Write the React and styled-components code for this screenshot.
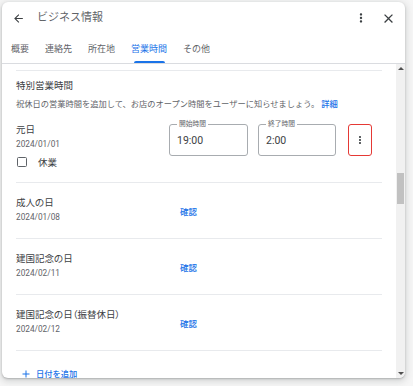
import React from 'react';
import styled, { createGlobalStyle } from 'styled-components';

const Global = createGlobalStyle`
  html, body { margin: 0; padding: 0; background: #f6f6f6; }
  body { font-family: Roboto, "Noto Sans CJK JP", sans-serif; color: #3c4043; }
  * { box-sizing: border-box; }
`;

const Page = styled.div`
  padding: 2px 0 0 2px;
  height: 386px;
`;

const Dialog = styled.div`
  width: 403px;
  height: 376px;
  background: #fff;
  border-radius: 6px;
  box-shadow: 0 1px 2px rgba(60, 64, 67, 0.3), 0 2px 6px 2px rgba(60, 64, 67, 0.15);
  display: flex;
  flex-direction: column;
  overflow: hidden;
`;

const Header = styled.div`
  height: 32px;
  flex: none;
  display: flex;
  align-items: center;
  padding: 0 5px 0 4px;
  gap: 3px;
`;

const IconButton = styled.div`
  width: 24px;
  height: 24px;
  display: flex;
  align-items: center;
  justify-content: center;
  color: #3c4043;
`;

const Title = styled.div`
  flex: 1;
  margin-left: 4px;
  font-size: 11px;
  color: #5f6368;
  line-height: 16px;
`;

const TabBar = styled.div`
  height: 30px;
  flex: none;
  display: flex;
  padding-left: 1px;
  border-bottom: 1px solid #dadce0;
`;

const Tab = styled.div`
  position: relative;
  padding: 0 8px;
  display: flex;
  align-items: center;
  font-size: 9px;
  color: ${(p) => (p.$active ? '#1a73e8' : '#5f6368')};
  &::after {
    content: '';
    display: ${(p) => (p.$active ? 'block' : 'none')};
    position: absolute;
    left: 11px;
    right: 10px;
    bottom: 0;
    height: 2.5px;
    border-radius: 2px 2px 0 0;
    background: #1a73e8;
  }
`;

const Body = styled.div`
  flex: 1;
  min-height: 0;
  display: flex;
`;

const Content = styled.div`
  flex: 1;
  overflow: hidden;
  padding: 6px 14px 0 14px;
`;

const Divider = styled.div`
  height: 1px;
  background: #e8eaed;
`;

const SectionTitle = styled.div`
  margin-top: 7px;
  font-size: 9.5px;
  line-height: 16px;
  color: #3c4043;
`;

const Description = styled.div`
  margin-top: 3px;
  font-size: 8.25px;
  line-height: 14px;
  color: #5f6368;
  white-space: nowrap;
`;

const Link = styled.span`
  color: #1a73e8;
  font-weight: 500;
`;

const Row = styled.div`
  display: flex;
  align-items: ${(p) => (p.$top ? 'flex-start' : 'center')};
  justify-content: ${(p) => (p.$top ? 'space-between' : 'flex-start')};
  padding: ${(p) => (p.$top ? '12px 0 13px' : '13px 0 14px')};
  border-bottom: 1px solid #e8eaed;
`;

const DayInfo = styled.div`
  width: ${(p) => (p.$w ? `${p.$w}px` : 'auto')};
  flex: none;
  display: flex;
  flex-direction: column;
`;

const DayName = styled.div`
  font-size: 9.5px;
  line-height: 14px;
  color: #3c4043;
  white-space: nowrap;
  font-feature-settings: 'palt';
`;

const DayDate = styled.div`
  font-size: 8.25px;
  line-height: 14px;
  color: #5f6368;
`;

const CheckRow = styled.div`
  margin-top: 4px;
  height: 14px;
  display: flex;
  align-items: center;
  gap: 11px;
  font-size: 9.5px;
  color: #3c4043;
`;

const CheckBox = styled.div`
  margin-left: 1px;
  width: 10px;
  height: 10px;
  border: 1.5px solid #5f6368;
  border-radius: 1.5px;
`;

const Confirm = styled.div`
  margin-top: 4px;
  font-size: 8.5px;
  line-height: 14px;
  font-weight: 500;
  color: #1a73e8;
`;

const Fields = styled.div`
  margin-top: 1px;
  margin-right: 10px;
  display: flex;
  align-items: center;
`;

const TimeField = styled.div`
  position: relative;
  width: ${(p) => p.$w}px;
  height: 32px;
  margin-right: ${(p) => p.$mr}px;
  border: 1px solid #a8acb0;
  border-radius: 3px;
  display: flex;
  align-items: center;
  padding-left: 7px;
  font-size: 10.5px;
  color: #3c4043;
`;

const FieldLabel = styled.span`
  position: absolute;
  left: 7px;
  top: -5px;
  padding: 0 2px;
  background: #fff;
  font-size: 6.75px;
  line-height: 9px;
  color: #5f6368;
`;

const MenuButton = styled.div`
  width: 24px;
  height: 32px;
  border: 1.5px solid #e53935;
  border-radius: 3px;
  display: flex;
  align-items: center;
  justify-content: center;
  color: #3c4043;
`;

const AddRow = styled.div`
  margin-top: 16px;
  padding-left: 4px;
  display: flex;
  align-items: center;
  gap: 4px;
  font-size: 8.25px;
  line-height: 14px;
  font-weight: 500;
  color: #1a73e8;
`;

const Track = styled.div`
  width: 9px;
  flex: none;
  background: #f1f1f1;
  display: flex;
  flex-direction: column;
`;

const Arrow = styled.div`
  height: 9px;
  flex: none;
  display: flex;
  align-items: center;
  justify-content: center;
  &::before {
    content: '';
    border-left: 3px solid transparent;
    border-right: 3px solid transparent;
    ${(p) => (p.$down ? 'border-top' : 'border-bottom')}: 3px solid #505050;
  }
`;

const Thumb = styled.div`
  margin: ${(p) => p.$offset}px 1px 0;
  height: ${(p) => p.$size}px;
  background: #c1c1c1;
  flex: none;
`;

const Spacer = styled.div`
  flex: 1;
`;

const Icon = ({ d, size }) => (
  <svg width={size} height={size} viewBox="0 0 24 24" fill="currentColor">
    <path d={d} />
  </svg>
);

const ARROW_BACK = 'M20 11H7.83l5.59-5.59L12 4l-8 8 8 8 1.41-1.41L7.83 13H20v-2z';
const MORE_VERT =
  'M12 8c1.1 0 2-.9 2-2s-.9-2-2-2-2 .9-2 2 .9 2 2 2zm0 2c-1.1 0-2 .9-2 2s.9 2 2 2 2-.9 2-2-.9-2-2-2zm0 6c-1.1 0-2 .9-2 2s.9 2 2 2 2-.9 2-2-.9-2-2-2z';
const CLOSE =
  'M19 6.41L17.59 5 12 10.59 6.41 5 5 6.41 10.59 12 5 17.59 6.41 19 12 13.41 17.59 19 19 17.59 13.41 12z';
const ADD = 'M19 13h-6v6h-2v-6H5v-2h6V5h2v6h6v2z';

const tabs = [
  { label: '概要' },
  { label: '連絡先' },
  { label: '所在地' },
  { label: '営業時間', active: true },
  { label: 'その他' },
];

const holidays = [
  { name: '成人の日', date: '2024/01/08' },
  { name: '建国記念の日', date: '2024/02/11' },
  { name: '建国記念の日（振替休日）', date: '2024/02/12' },
];

export default function App() {
  return (
    <>
      <Global />
      <Page>
        <Dialog>
          <Header>
            <IconButton>
              <Icon d={ARROW_BACK} size={13} />
            </IconButton>
            <Title>ビジネス情報</Title>
            <IconButton>
              <Icon d={MORE_VERT} size={14} />
            </IconButton>
            <IconButton>
              <Icon d={CLOSE} size={15} />
            </IconButton>
          </Header>
          <TabBar>
            {tabs.map((t) => (
              <Tab key={t.label} $active={t.active}>
                {t.label}
              </Tab>
            ))}
          </TabBar>
          <Body>
            <Content>
              <Divider />
              <SectionTitle>特別営業時間</SectionTitle>
              <Description>
                祝休日の営業時間を追加して、お店のオープン時間をユーザーに知らせましょう。 <Link>詳細</Link>
              </Description>
              <Row $top>
                <DayInfo>
                  <DayName>元日</DayName>
                  <DayDate>2024/01/01</DayDate>
                  <CheckRow>
                    <CheckBox />
                    休業
                  </CheckRow>
                </DayInfo>
                <Fields>
                  <TimeField $w={79} $mr={10}>
                    <FieldLabel>開始時間</FieldLabel>
                    19:00
                  </TimeField>
                  <TimeField $w={78} $mr={12}>
                    <FieldLabel>終了時間</FieldLabel>
                    2:00
                  </TimeField>
                  <MenuButton>
                    <Icon d={MORE_VERT} size={12} />
                  </MenuButton>
                </Fields>
              </Row>
              {holidays.map((h) => (
                <Row key={h.date}>
                  <DayInfo $w={164}>
                    <DayName>{h.name}</DayName>
                    <DayDate>{h.date}</DayDate>
                  </DayInfo>
                  <Confirm>確認</Confirm>
                </Row>
              ))}
              <AddRow>
                <Icon d={ADD} size={12} />
                日付を追加
              </AddRow>
            </Content>
            <Track>
              <Arrow />
              <Thumb $offset={100} $size={31} />
              <Spacer />
              <Arrow $down />
            </Track>
          </Body>
        </Dialog>
      </Page>
    </>
  );
}
